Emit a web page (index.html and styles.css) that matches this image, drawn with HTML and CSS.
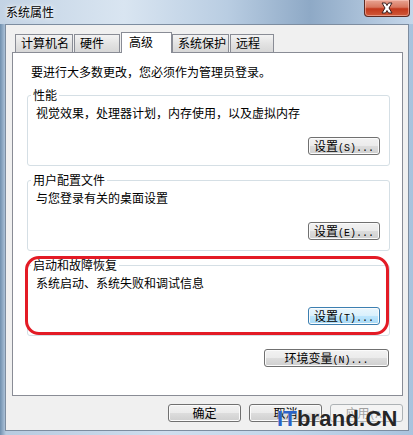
FILE: index.html
```html
<!DOCTYPE html>
<html lang="zh-CN">

<head>
    <meta charset="UTF-8">
    <title>系统属性</title>
    <link rel="stylesheet" href="styles.css">
</head>

<body>
    <div class="window">
        <div class="titlebar">
            <span class="title">系统属性</span>
            <div class="close">
                <svg width="18" height="12" viewBox="0 0 18 12">
                    <path d="M4 1h3.5L9 3.5 10.5 1H14l-3 5 3 5h-3.5L9 8.5 7.5 11H4l3-5z" fill="#fff" stroke="#3a2020" stroke-width="1" stroke-linejoin="round" />
                </svg>
            </div>
        </div>

        <div class="client">
            <div class="tabs">
                <div class="tab tab-name">计算机名</div>
                <div class="tab tab-hw">硬件</div>
                <div class="tab tab-adv selected">高级</div>
                <div class="tab tab-prot">系统保护</div>
                <div class="tab tab-remote">远程</div>
            </div>

            <div class="panel">
                <div class="intro">要进行大多数更改，您必须作为管理员登录。</div>

                <fieldset class="group">
                    <legend>性能</legend>
                    <div class="desc">视觉效果，处理器计划，内存使用，以及虚拟内存</div>
                    <div class="row">
                        <button class="btn btn-set">设置<span class="key">(S)...</span></button>
                    </div>
                </fieldset>

                <fieldset class="group">
                    <legend>用户配置文件</legend>
                    <div class="desc">与您登录有关的桌面设置</div>
                    <div class="row">
                        <button class="btn btn-set">设置<span class="key">(E)...</span></button>
                    </div>
                </fieldset>

                <div class="marked">
                    <fieldset class="group">
                        <legend>启动和故障恢复</legend>
                        <div class="desc">系统启动、系统失败和调试信息</div>
                        <div class="row">
                            <button class="btn btn-set hot">设置<span class="key">(T)...</span></button>
                        </div>
                    </fieldset>
                </div>

                <div class="env-row">
                    <button class="btn btn-env">环境变量<span class="key">(N)...</span></button>
                </div>
            </div>

            <div class="dialog-buttons">
                <button class="btn btn-dlg">确定</button>
                <button class="btn btn-dlg">取消</button>
                <button class="btn btn-dlg" disabled>应用<span class="key">(A)</span></button>
            </div>
        </div>

        <div class="watermark"><span class="wm-it">IT</span>brand.CN</div>
    </div>
</body>

</html>
```

FILE: styles.css
```css
* {
    margin: 0;
    padding: 0;
    box-sizing: border-box;
}

html,
body {
    width: 413px;
    height: 435px;
    overflow: hidden;
}

body {
    font-family: "Noto Sans CJK SC", "Liberation Sans", sans-serif;
    font-size: 12px;
    line-height: 14px;
    color: #000;
}

.window {
    position: relative;
    height: 435px;
    display: flex;
    flex-direction: column;
    background: linear-gradient(90deg, #6f8fae 0px, #b7cbe0 6px, #cfdeee 40%, #c2d6ea 70%, #a9c3de 100%);
}

.titlebar {
    height: 24px;
    display: flex;
    align-items: flex-start;
    padding-left: 6px;
    background: linear-gradient(90deg, #c3d3e4 0%, #d9e5f1 30%, #b9cde2 55%, #8ea9c6 75%, #c5d7ea 100%);
}

.title {
    line-height: 24px;
    font-size: 12px;
    text-shadow: 0 0 6px #fff, 0 0 3px #fff;
}

.close {
    margin-left: auto;
    margin-right: 3px;
    width: 46px;
    height: 17px;
    display: flex;
    align-items: center;
    justify-content: center;
    border: 1px solid #5c2a22;
    border-top: none;
    border-radius: 0 0 4px 4px;
    background: linear-gradient(#e8a493 0%, #d8765e 45%, #c2381c 55%, #d05a3a 100%);
    box-shadow: inset 0 0 0 1px rgba(255, 210, 200, 0.5);
}

.client {
    flex: 1;
    margin: 0 4px 4px 5px;
    padding: 7px 5px 0 6px;
    background: #f0f0f0;
    border: 1px solid #7d8da0;
}

/* tab strip */
.tabs {
    display: flex;
    align-items: flex-end;
    height: 20px;
    padding-left: 3px;
    position: relative;
    z-index: 1;
}

.tab {
    height: 18px;
    line-height: 16px;
    padding-left: 5px;
    margin-right: 1px;
    border: 1px solid #898c95;
    border-bottom: none;
    background: linear-gradient(#f3f3f3, #e3e3e3 50%, #d7d7d7);
}

.tab.selected {
    height: 21px;
    margin-bottom: -1px;
    padding-left: 7px;
    line-height: 18px;
    background: #fff;
    margin-right: 0;
}

.tab-name {
    width: 58px;
}

.tab-hw {
    width: 46px;
}

.tab-adv {
    width: 51px;
}

.tab-prot {
    width: 57px;
}

.tab-remote {
    width: 44px;
}

.panel {
    height: 344px;
    display: flex;
    flex-direction: column;
    padding: 12px 0 0 14px;
    background: #fff;
    border: 1px solid #898c95;
}

.intro {
    margin: 0 0 9px 4px;
}

.group {
    width: 363px;
    min-width: 0;
    padding: 0 0 10px 0;
    border: 1px solid #d5dfe5;
    border-radius: 3px;
}

.group+.group,
.group+.marked {
    margin-top: 7px;
}

.group legend {
    margin-left: 3px;
    padding: 0 2px;
    line-height: 14px;
}

.desc {
    margin: 4px 0 0 8px;
}

.row {
    display: flex;
    justify-content: flex-end;
    margin-top: 17px;
    padding-right: 9px;
}

.marked {
    position: relative;
    width: 363px;
}

.marked::after {
    content: "";
    position: absolute;
    top: -2px;
    left: -2px;
    right: 1px;
    bottom: 1px;
    border: 3px solid #e31b25;
    border-radius: 14px;
    pointer-events: none;
}

.env-row {
    width: 363px;
    display: flex;
    justify-content: flex-end;
    padding-right: 1px;
    margin-top: 13px;
}

/* buttons */
.btn {
    height: 18px;
    font-family: "Noto Sans CJK SC", sans-serif;
    font-size: 12px;
    line-height: 16px;
    color: #000;
    border: 1px solid #707070;
    border-radius: 3px;
    background: linear-gradient(#f2f2f2 0%, #ebebeb 50%, #dddddd 50%, #cfcfcf 100%);
    box-shadow: inset 0 0 0 1px #fbfbfb;
}

.btn .key {
    font-family: "Liberation Mono", monospace;
    font-size: 10px;
}

.btn.hot {
    border-color: #3c7fb1;
    background: linear-gradient(#eaf6fd 0%, #d9f0fc 50%, #bee6fd 50%, #a7d9f5 100%);
}

.btn:disabled {
    color: #a0a0a0;
    border-color: #adb2b5;
    background: #f4f4f4;
    box-shadow: none;
}

.btn-set {
    width: 72px;
}

.btn-env {
    width: 125px;
}

.dialog-buttons {
    display: flex;
    justify-content: flex-end;
    gap: 8px;
    margin-top: 8px;
}

.btn-dlg {
    width: 73px;
}

.watermark {
    position: absolute;
    left: 277px;
    top: 407px;
    font-family: "Liberation Sans", sans-serif;
    font-weight: bold;
    font-size: 22px;
    line-height: 24px;
    letter-spacing: 0.2px;
    color: #262626;
    text-shadow: 0 0 2px rgba(255, 255, 255, 0.8);
}

.wm-it {
    color: #2a63c8;
}
```
